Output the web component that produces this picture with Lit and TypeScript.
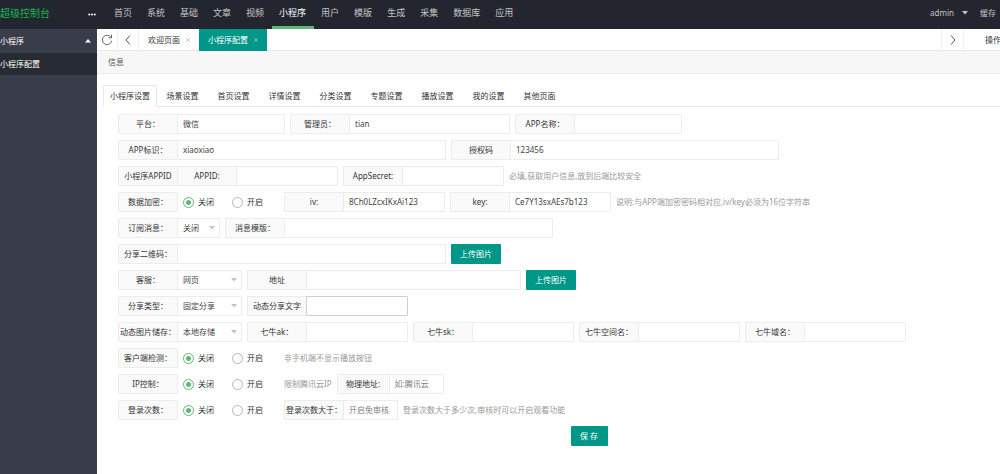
import { LitElement, html, css, svg, nothing } from "lit";
import { customElement, property, state } from "lit/decorators.js";
import { classMap } from "lit/directives/class-map.js";

type Size = "xs" | "sm" | "md" | "lg" | "xl" | "xxl";

const cross = html`<svg class="cross" viewBox="0 0 6 6" aria-hidden="true">
  <path d="M1 1 L5 5 M5 1 L1 5" />
</svg>`;

const chevron = (d: string) => html`<svg class="chev" viewBox="0 0 12 12" aria-hidden="true">
  ${svg`<path d=${d} />`}
</svg>`;

/** Label and text box joined in one frame. */
@customElement("form-field")
export class FormField extends LitElement {
  @property() label = "";
  @property() value = "";
  @property() hint = "";
  @property() size: Size = "md";
  @property({ type: Boolean }) narrow = false;
  @property({ type: Boolean }) strong = false;

  static styles = css`
    :host { display: inline-flex; }
    .label {
      box-sizing: border-box; width: 60px; height: 20px; line-height: 18px;
      border: 1px solid #ececec; border-radius: 1px 0 0 1px; background: #fafafa;
      text-align: center; white-space: nowrap;
    }
    .label.narrow { width: 53px; }
    .box {
      box-sizing: border-box; height: 20px; margin: 0 0 0 -1px; padding: 0 5px 2px;
      border: 1px solid #ececec; border-radius: 0 1px 1px 0; background: #fff;
      font: inherit; color: #444; outline: none;
    }
    .box::placeholder { color: #808080; opacity: 1; }
    .box.strong, .box:focus { border-color: #cfcfcf; }
    .xs { width: 55px; }
    .sm { width: 102px; }
    .md { width: 108px; }
    .lg { width: 161px; }
    .xl { width: 215px; }
    .xxl { width: 269px; }
  `;

  render() {
    return html`
      <label class=${classMap({ label: true, narrow: this.narrow })} for="box">${this.label}</label>
      <input
        id="box"
        type="text"
        class=${classMap({ box: true, strong: this.strong, [this.size]: true })}
        .value=${this.value}
        placeholder=${this.hint || nothing}
      />
    `;
  }
}

/** Label and drop-down joined in one frame. */
@customElement("form-select")
export class FormSelect extends LitElement {
  @property() label = "";
  @property({ type: Array }) options: string[] = [];
  @property({ type: Boolean }) short = false;

  static styles = css`
    :host { display: inline-flex; }
    .label {
      box-sizing: border-box; width: 60px; height: 20px; line-height: 18px;
      border: 1px solid #ececec; border-radius: 1px 0 0 1px; background: #fafafa;
      text-align: center; white-space: nowrap;
    }
    .wrap { position: relative; display: flex; margin-left: -1px; }
    .select {
      box-sizing: border-box; width: 65px; height: 20px; padding: 0 5px;
      border: 1px solid #ececec; border-radius: 0 1px 1px 0; background: #fff;
      font: inherit; color: #444; appearance: none; outline: none;
    }
    .select.short { width: 43px; }
    .arrow {
      position: absolute; right: 5px; top: 8px; width: 6px; height: 4px;
      fill: #c2c2c2; pointer-events: none;
    }
  `;

  render() {
    return html`
      <label class="label" for="sel">${this.label}</label>
      <span class="wrap">
        <select id="sel" class=${classMap({ select: true, short: this.short })}>
          ${this.options.map((o) => html`<option>${o}</option>`)}
        </select>
        <svg class="arrow" viewBox="0 0 6 4" aria-hidden="true"><path d="M0 0 H6 L3 3.5 Z" /></svg>
      </span>
    `;
  }
}

/** Framed caption followed by an off / on pair. */
@customElement("form-switch")
export class FormSwitch extends LitElement {
  @property() label = "";

  static styles = css`
    :host { display: inline-flex; }
    .group { display: flex; align-items: center; gap: 5px; }
    .options { display: flex; gap: 18px; width: 96px; }
    .label {
      box-sizing: border-box; width: 60px; height: 20px; line-height: 18px;
      border: 1px solid #ececec; border-radius: 1px; background: #fafafa;
      text-align: center; white-space: nowrap;
    }
    .option { display: flex; align-items: center; gap: 4px; white-space: nowrap; }
    .dot {
      box-sizing: border-box; width: 11px; height: 11px; margin: 0; appearance: none;
      border: 1px solid #b5b5b5; border-radius: 50%; background: #fff;
    }
    .dot:checked {
      border-color: #5fb878;
      background: radial-gradient(circle, #5fb878 2px, #fff 3px);
    }
  `;

  render() {
    return html`
      <div class="group" role="radiogroup" aria-labelledby="cap">
        <span class="label" id="cap">${this.label}</span>
        <div class="options">
          <label class="option"><input class="dot" type="radio" name="v" checked />关闭</label>
          <label class="option"><input class="dot" type="radio" name="v" />开启</label>
        </div>
      </div>
    `;
  }
}

@customElement("app-root")
export class AppRoot extends LitElement {
  @state() private section = "小程序";
  @state() private tab = "小程序设置";

  private sections = ["首页", "系统", "基础", "文章", "视频", "小程序", "用户", "模版", "生成", "采集", "数据库", "应用"];
  private tabs = ["小程序设置", "场景设置", "首页设置", "详情设置", "分类设置", "专题设置", "播放设置", "我的设置", "其他页面"];

  static styles = css`
    :host {
      display: flex; flex-direction: column; min-height: 100vh; overflow: hidden;
      background: #fff; color: #333;
      font: 8px/12px "Noto Sans", "Noto Sans CJK SC", sans-serif;
    }
    a { color: inherit; text-decoration: none; }
    button { font: inherit; color: inherit; border: 0; margin: 0; padding: 0; background: none; cursor: pointer; }

    .header { display: flex; height: 29px; background: #23262e; color: #c3c4c7; line-height: 26px; }
    .logo { width: 88px; font-size: 10px; color: #16b354; }
    .more { display: flex; align-items: center; width: 19px; }
    .more svg { width: 8px; height: 3px; fill: #e8e8e8; }
    .nav { display: flex; flex: 1; height: 29px; font-size: 9px; white-space: nowrap; }
    .nav a { box-sizing: border-box; padding: 0 8px 0 7px; border-bottom: 3px solid transparent; }
    .nav a.on { color: #fff; border-color: #5fb878; }
    .user { display: flex; align-items: center; gap: 8px; height: 26px; padding-right: 12px; }
    .user svg { width: 6px; height: 4px; fill: #c3c4c7; }
    .cache { padding-right: 4px; }

    .body { display: flex; flex: 1; }
    .side { flex: none; width: 97px; background: #393d49; color: #fff; }
    .side a { display: flex; align-items: center; justify-content: space-between; height: 24px; padding-right: 6px; }
    .side a.child { height: 22px; background: #282b33; }
    .side svg { width: 6px; height: 4px; fill: #fff; }

    .main { flex: 1; min-width: 0; }
    .pages { display: flex; height: 21px; border-bottom: 1px solid #e8e8e8; white-space: nowrap; }
    .tool { display: flex; align-items: center; justify-content: center; width: 21px; border-right: 1px solid #f0f0f0; }
    .tool.edge { width: 23px; border-left: 1px solid #f0f0f0; }
    .refresh { width: 12px; height: 12px; fill: none; stroke: #666; }
    .chev { width: 12px; height: 12px; fill: none; stroke: #555; }
    .page { display: flex; align-items: center; gap: 5px; height: 22px; padding: 0 8px 0 9px; }
    .page.on { background: #009688; color: #fff; }
    .cross { width: 6px; height: 6px; fill: none; stroke: #b8b8b8; stroke-width: 0.7; }
    .page.on .cross { stroke: #a9d8d3; }
    .spacer { flex: 1; }
    .ops { width: 36px; padding-left: 21px; box-sizing: border-box; text-align: left; }

    .info { height: 22px; line-height: 22px; padding-left: 11px; border-bottom: 1px solid #ececec; background: #f7f7f7; color: #555; }

    .tabs { display: flex; margin: 11px 0 0 6px; height: 21px; border-bottom: 1px solid #e8e8e8; white-space: nowrap; }
    .tabs button { min-width: 51px; height: 21px; }
    .tabs button.on {
      box-sizing: border-box; height: 22px; padding: 0 6px;
      border: 1px solid #e8e8e8; border-bottom-color: #fff; border-radius: 1px 1px 0 0; background: #fff;
    }

    .form { display: flex; flex-direction: column; gap: 6px; padding: 7px 0 28px 21px; white-space: nowrap; }
    .row { display: flex; align-items: center; gap: 5px; height: 20px; }
    .pair { display: flex; }
    .pair .cap {
      box-sizing: border-box; width: 60px; height: 20px; line-height: 18px; text-align: center;
      border: 1px solid #ececec; border-radius: 1px; background: #fafafa;
    }
    .pair form-field { margin-left: -1px; }
    .note { color: #999; }
    .btn { width: 50px; height: 20px; border-radius: 1px; background: #009688; color: #fff; }
    .foot { display: flex; justify-content: center; padding-left: 60px; }
    .save { width: 37px; }
  `;

  render() {
    return html`
      <header class="header">
        <a class="logo" href="#">超级控制台</a>
        <button class="more" aria-label="菜单">
          <svg viewBox="0 0 8 3"><circle cx="1.2" cy="1.5" r="1.1" /><circle cx="4" cy="1.5" r="1.1" /><circle cx="6.8" cy="1.5" r="1.1" /></svg>
        </button>
        <nav class="nav">
          ${this.sections.map(
            (s) => html`<a href="#" class=${classMap({ on: s === this.section })} @click=${() => (this.section = s)}>${s}</a>`
          )}
        </nav>
        <a class="user" href="#">admin <svg viewBox="0 0 6 4"><path d="M0 0 H6 L3 3.5 Z" /></svg></a>
        <a class="cache" href="#">缓存</a>
      </header>
      <div class="body">
        <aside class="side">
          <a href="#">小程序 <svg viewBox="0 0 6 4"><path d="M0 3.5 H6 L3 0 Z" /></svg></a>
          <a class="child" href="#">小程序配置</a>
        </aside>
        <main class="main">
          <div class="pages">
            <button class="tool" aria-label="刷新">
              <svg class="refresh" viewBox="0 0 12 12">
                <path d="M10 3.4 A4.7 4.7 0 1 0 10.7 6.6" />
                <path d="M10.5 0.8 V3.8 H7.5" />
              </svg>
            </button>
            <button class="tool" aria-label="向左">${chevron("M8 1.5 L4 6 L8 10.5")}</button>
            <button class="page">欢迎页面 ${cross}</button>
            <button class="page on">小程序配置 ${cross}</button>
            <span class="spacer"></span>
            <button class="tool edge" aria-label="向右">${chevron("M4 1.5 L8 6 L4 10.5")}</button>
            <button class="ops">操作</button>
          </div>
          <div class="info">信息</div>
          <div class="tabs" role="tablist">
            ${this.tabs.map(
              (t) => html`<button role="tab" aria-selected=${t === this.tab} class=${classMap({ on: t === this.tab })}
                @click=${() => (this.tab = t)}>${t}</button>`
            )}
          </div>
          <form class="form" @submit=${(e: Event) => e.preventDefault()}>
            <div class="row">
              <form-field label="平台：" value="微信"></form-field>
              <form-field label="管理员：" value="tian" size="lg"></form-field>
              <form-field label="APP名称："></form-field>
            </div>
            <div class="row">
              <form-field label="APP标识：" value="xiaoxiao" size="xxl"></form-field>
              <form-field label="授权码" value="123456" size="xxl"></form-field>
            </div>
            <div class="row">
              <div class="pair">
                <span class="cap">小程序APPID</span>
                <form-field label="APPID:" size="sm"></form-field>
              </div>
              <form-field label="AppSecret:" size="sm"></form-field>
              <span class="note">必填,获取用户信息,放到后端比较安全</span>
            </div>
            <div class="row">
              <form-switch label="数据加密："></form-switch>
              <form-field label="iv:" value="8Ch0LZcxIKxAi123" size="sm"></form-field>
              <form-field label="key:" value="Ce7Y13sxAEs7b123" size="sm"></form-field>
              <span class="note">说明:与APP端加密密码相对应,iv/key必须为16位字符串</span>
            </div>
            <div class="row">
              <form-select label="订阅消息：" .options=${["关闭", "开启"]} short></form-select>
              <form-field label="消息模版：" size="xxl"></form-field>
            </div>
            <div class="row">
              <form-field label="分享二维码：" size="xxl"></form-field>
              <button type="button" class="btn">上传图片</button>
            </div>
            <div class="row">
              <form-select label="客服：" .options=${["网页"]}></form-select>
              <form-field label="地址" size="xl"></form-field>
              <button type="button" class="btn">上传图片</button>
            </div>
            <div class="row">
              <form-select label="分享类型：" .options=${["固定分享", "动态分享"]}></form-select>
              <form-field label="动态分享文字" size="sm" strong></form-field>
            </div>
            <div class="row">
              <form-select label="动态图片储存：" .options=${["本地存储", "七牛存储"]}></form-select>
              <form-field label="七牛ak：" size="sm"></form-field>
              <form-field label="七牛sk：" size="sm"></form-field>
              <form-field label="七牛空间名：" size="sm"></form-field>
              <form-field label="七牛域名：" size="sm"></form-field>
            </div>
            <div class="row">
              <form-switch label="客户端检测："></form-switch>
              <span class="note">非手机端不显示播放按钮</span>
            </div>
            <div class="row">
              <form-switch label="IP控制："></form-switch>
              <span class="note">限制腾讯云IP</span>
              <form-field label="物理地址:" hint="如:腾讯云" size="xs" narrow></form-field>
            </div>
            <div class="row">
              <form-switch label="登录次数："></form-switch>
              <form-field label="登录次数大于：" hint="开启免审核" size="xs"></form-field>
              <span class="note">登录次数大于多少次,审核时可以开启观看功能</span>
            </div>
            <div class="foot"><button class="btn save">保 存</button></div>
          </form>
        </main>
      </div>
    `;
  }
}
